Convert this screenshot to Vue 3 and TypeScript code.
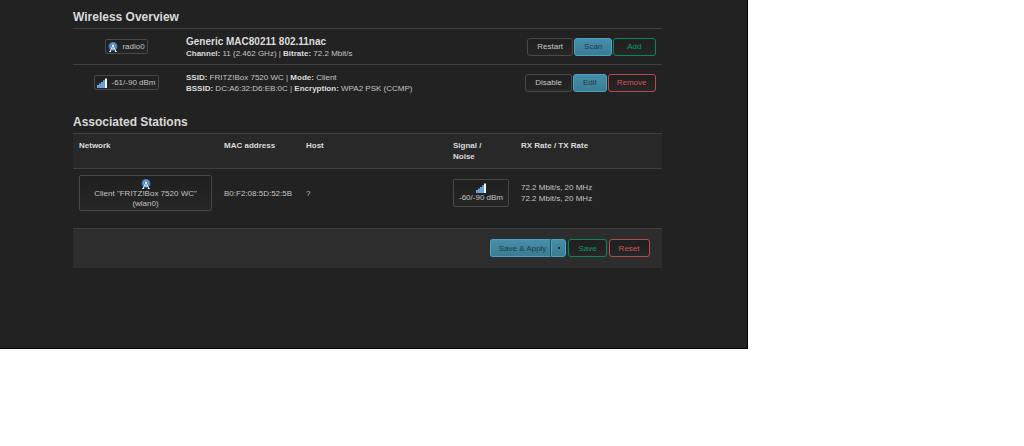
<script setup lang="ts">
interface Action {
  label: string
  kind: 'neutral' | 'action' | 'positive' | 'negative'
}
interface Detail {
  label: string
  value: string
}
interface Row {
  icon: 'radio' | 'signal'
  badge: string
  title?: string
  lines: Detail[][]
  actions: Action[]
}

const rows: Row[] = [
  {
    icon: 'radio',
    badge: 'radio0',
    title: 'Generic MAC80211 802.11nac',
    lines: [
      [
        { label: 'Channel:', value: '11 (2.462 GHz)' },
        { label: 'Bitrate:', value: '72.2 Mbit/s' },
      ],
    ],
    actions: [
      { label: 'Restart', kind: 'neutral' },
      { label: 'Scan', kind: 'action' },
      { label: 'Add', kind: 'positive' },
    ],
  },
  {
    icon: 'signal',
    badge: '-61/-90 dBm',
    lines: [
      [
        { label: 'SSID:', value: 'FRITZ!Box 7520 WC' },
        { label: 'Mode:', value: 'Client' },
      ],
      [
        { label: 'BSSID:', value: 'DC:A6:32:D6:EB:0C' },
        { label: 'Encryption:', value: 'WPA2 PSK (CCMP)' },
      ],
    ],
    actions: [
      { label: 'Disable', kind: 'neutral' },
      { label: 'Edit', kind: 'action' },
      { label: 'Remove', kind: 'negative' },
    ],
  },
]
</script>

<template>
  <svg class="defs" aria-hidden="true">
    <symbol id="radio" viewBox="0 0 10 10">
      <circle cx="5" cy="4.4" r="4.4" fill="#3f7ab5" />
      <circle cx="5" cy="4" r="2.6" fill="none" stroke="#86b4de" stroke-width=".7" />
      <path d="M5 3.4 2 9.6M5 3.4l3 6.2M3.4 7h3.2" fill="none" stroke="#dfe5ea" stroke-width="1" />
      <path d="M1.2 9.5h2M6.8 9.5h2" stroke="#dfe5ea" stroke-width="1" />
      <circle cx="5" cy="3.4" r=".9" fill="#fff" />
    </symbol>
    <symbol id="signal" viewBox="0 0 10 10">
      <path d="M0 7h1.9v3H0zM2 5.5h1.9V10H2zM4 4h1.9v6H4zM6 2.2h1.9V10H6z" fill="#6fa5de" />
      <path d="M8 .5h2V10H8z" fill="#f1f5f8" />
    </symbol>
  </svg>
  <div class="page">
    <main>
      <section>
        <h3>Wireless Overview</h3>
        <table class="overview">
          <tbody>
            <tr v-for="row in rows" :key="row.badge">
              <td class="state">
                <span class="badge">
                  <svg class="icon"><use :href="'#' + row.icon" /></svg>
                  <span>{{ row.badge }}</span>
                </span>
              </td>
              <td>
                <div v-if="row.title" class="title">{{ row.title }}</div>
                <div v-for="(line, i) in row.lines" :key="i">
                  <template v-for="(d, j) in line" :key="d.label"><template v-if="j"> | </template><strong>{{ d.label }}</strong> {{ d.value }}</template>
                </div>
              </td>
              <td class="actions">
                <div class="buttons">
                  <button v-for="a in row.actions" :key="a.label" type="button" :class="a.kind">{{ a.label }}</button>
                </div>
              </td>
            </tr>
          </tbody>
        </table>
      </section>

      <section>
        <h3>Associated Stations</h3>
        <table class="stations">
          <thead>
            <tr>
              <th class="network">Network</th>
              <th class="mac">MAC address</th>
              <th class="host">Host</th>
              <th class="noise">Signal /<br />Noise</th>
              <th>RX Rate / TX Rate</th>
            </tr>
          </thead>
          <tbody>
            <tr>
              <td>
                <span class="badge stacked">
                  <svg class="icon"><use href="#radio" /></svg>
                  <span>Client "FRITZ!Box 7520 WC" (wlan0)</span>
                </span>
              </td>
              <td>B0:F2:08:5D:52:5B</td>
              <td>?</td>
              <td>
                <span class="badge stacked narrow">
                  <svg class="icon"><use href="#signal" /></svg>
                  <span>-60/-90 dBm</span>
                </span>
              </td>
              <td>72.2 Mbit/s, 20 MHz<br />72.2 Mbit/s, 20 MHz</td>
            </tr>
          </tbody>
        </table>
      </section>

      <footer class="buttons">
        <div class="split">
          <button type="button" class="action">Save &amp; Apply</button>
          <button type="button" class="action more" aria-label="More apply options"><span class="caret"></span></button>
        </div>
        <button type="button" class="positive">Save</button>
        <button type="button" class="negative">Reset</button>
      </footer>
    </main>
  </div>
</template>

<style>
body {
  margin: 0;
  background: #fff;
}
</style>

<style scoped>
.defs {
  position: absolute;
  width: 0;
  height: 0;
}
.page {
  box-sizing: border-box;
  width: 73%;
  padding: 8px 85px 80px 73px;
  background: #222;
  border-right: 1px solid #000;
  border-bottom: 1px solid #000;
  color: #c4c4c4;
  font: 8px/11px "Liberation Sans", Arial, sans-serif;
}
h3 {
  margin: 0;
  padding-bottom: 2px;
  color: #dadada;
  font-size: 12px;
  line-height: 18px;
}
table {
  width: 100%;
  border-collapse: collapse;
  table-layout: fixed;
}
tr {
  border-top: 1px solid #404040;
}
td,
th {
  padding: 0 6px;
  text-align: left;
}
strong,
th,
.title {
  color: #dcdcdc;
  font-weight: bold;
}
.title {
  font-size: 10px;
  line-height: 13px;
}
.overview {
  margin-bottom: 13px;
}
.overview td {
  height: 35px;
}
.overview .state {
  width: 95px;
  text-align: center;
}
.overview .actions {
  width: 134px;
}
.stations {
  margin-bottom: 11px;
}
.stations th {
  height: 22px;
  padding: 6px;
  background: #282828;
  vertical-align: top;
}
.stations td {
  height: 36px;
  padding: 6px;
}
.stations .network {
  width: 133px;
}
.stations .mac {
  width: 70px;
}
.stations .host {
  width: 135px;
}
.stations .noise {
  width: 56px;
}
.badge {
  display: inline-flex;
  align-items: center;
  gap: 4px;
  box-sizing: border-box;
  padding: 1px 2px;
  border: 1px solid #484848;
  border-radius: 2px;
  background: linear-gradient(#1f1f1f, #262626);
  vertical-align: middle;
}
.icon {
  width: 10px;
  height: 10px;
  flex: none;
}
.stacked {
  display: flex;
  flex-direction: column;
  gap: 0;
  padding: 3px 12px 1px;
  line-height: 10px;
  text-align: center;
}
.narrow {
  padding: 3px 4px;
}
.buttons {
  display: flex;
  justify-content: flex-end;
  gap: 1px;
}
button {
  box-sizing: border-box;
  height: 18px;
  padding: 0 9px;
  border: 1px solid #484848;
  border-radius: 3px;
  background: linear-gradient(#1f1f1f, #262626);
  color: #c8c8c8;
  font: inherit;
  white-space: nowrap;
}
.action {
  border-color: #4ba3c4;
  background: linear-gradient(#468ea9, #3b7c94);
  color: #1e3d49;
}
.positive {
  padding: 0 13px;
  border-color: #08875a;
  color: #0b9b67;
}
.negative {
  padding: 0 8px;
  border-color: #b54b4b;
  color: #d15555;
}
footer.buttons {
  gap: 2px;
  padding: 10px 12px 11px;
  border-top: 1px solid #404040;
  background: #2d2d2d;
}
footer .positive {
  padding: 0 9px;
}
footer .negative {
  padding: 0 9px;
}
.split {
  display: flex;
}
.split .action {
  padding: 0 4px 0 8px;
  border-right-color: #234c5a;
  border-radius: 3px 0 0 3px;
}
.split .more {
  width: 15px;
  padding: 0;
  border-right-color: #4ba3c4;
  border-radius: 0 3px 3px 0;
}
.caret {
  display: block;
  width: 2px;
  height: 2px;
  margin: 0 auto;
  background: #1c2c33;
}
</style>
